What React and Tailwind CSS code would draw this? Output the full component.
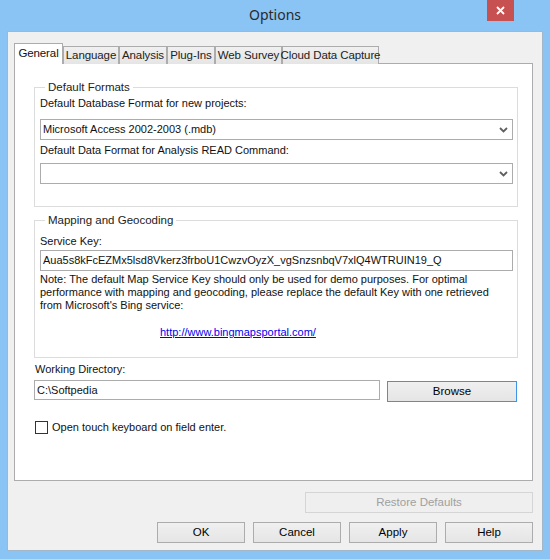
import React from "react";

function Chevron() {
  return (
    <svg width="9" height="6" viewBox="0 0 9 6" className="shrink-0">
      <path d="M1 1 L4.5 4.5 L8 1" fill="none" stroke="#606060" strokeWidth="1.8" />
    </svg>
  );
}

function Select({ value }) {
  return (
    <div className="h-[21px] border border-[#acacac] bg-white flex items-center pl-[2px] pr-[4px]">
      <span className="flex-1 whitespace-nowrap leading-none">{value}</span>
      <Chevron />
    </div>
  );
}

function Btn({ children, className = "" }) {
  return (
    <div
      className={
        "h-[21px] border border-[#acacac] bg-gradient-to-b from-[#f0f0f0] to-[#e5e5e5] flex items-center justify-center text-[11.5px] text-black " +
        className
      }
    >
      {children}
    </div>
  );
}

const tabs = [
  { name: "Language", w: "w-[56px]" },
  { name: "Analysis", w: "w-[48px]" },
  { name: "Plug-Ins", w: "w-[48px]" },
  { name: "Web Survey", w: "w-[67px]" },
  { name: "Cloud Data Capture", w: "w-[97px]" },
];

export default function App() {
  return (
    <div className="w-[550px] h-[559px] bg-[#8ac4f5] flex flex-col overflow-hidden font-['Liberation_Sans',Arial,sans-serif] text-[11px] text-[#111]">
      {/* title bar */}
      <div className="h-[31px] relative flex items-center justify-center shrink-0">
        <span className="text-[14px] text-[#2a2a2a] font-['Noto_Sans',sans-serif] leading-none -mt-[2px]">
          Options
        </span>
        <div className="absolute top-0 right-[36px] w-[27px] h-[21px] bg-[#c75050] flex items-center justify-center">
          <svg width="9" height="9" viewBox="0 0 9 9">
            <path d="M1 1 L8 8 M8 1 L1 8" stroke="#fff" strokeWidth="1.8" />
          </svg>
        </div>
      </div>

      {/* client */}
      <div className="mx-[7px] mb-[8px] flex-1 bg-[#f0f0f0] border border-[#a3b7ca] flex flex-col pl-[6px] pr-[9px] pt-[11px] pb-[7px]">
        {/* tabs */}
        <div className="flex items-end h-[21px] relative z-10 text-[11.5px] tracking-[-0.1px]">
          <div className="w-[49px] h-[21px] bg-white border border-b-0 border-[#acacac] flex items-center justify-center pb-[1px]">
            General
          </div>
          {tabs.map((t) => (
            <div
              key={t.name}
              className={
                t.w +
                " h-[18px] bg-gradient-to-b from-[#f0f0f0] to-[#e5e5e5] border border-b-0 border-[#acacac] flex items-center justify-center whitespace-nowrap text-[#222]"
              }
            >
              {t.name}
            </div>
          ))}
        </div>

        {/* panel */}
        <div className="h-[418px] -mt-px bg-white border border-[#acacac] flex flex-col pl-[19px] pr-[14px] pt-[16px]">
          <fieldset className="min-w-0 border border-[#dcdcdc] pl-[5px] pr-[4px] pb-[22px]">
            <legend className="ml-[5px] px-[3px] leading-[15px] text-[#222] text-[11.5px]">Default Formats</legend>
            <div className="leading-[15px] mt-[1px]">Default Database Format for new projects:</div>
            <div className="mt-[8px]">
              <Select value="Microsoft Access 2002-2003 (.mdb)" />
            </div>
            <div className="leading-[15px] mt-[3px]">Default Data Format for Analysis READ Command:</div>
            <div className="mt-[5px]">
              <Select value="" />
            </div>
          </fieldset>

          <fieldset className="min-w-0 mt-[6px] border border-[#dcdcdc] pl-[5px] pr-[4px] pb-[17px]">
            <legend className="ml-[5px] px-[3px] leading-[15px] text-[#222] text-[11.5px]">Mapping and Geocoding</legend>
            <div className="leading-[15px] mt-[6px]">Service Key:</div>
            <div className="mt-[1px] h-[21px] border border-[#acacac] flex items-center pl-[2px] whitespace-nowrap overflow-hidden">
              Aua5s8kFcEZMx5lsd8Vkerz3frboU1CwzvOyzX_vgSnzsnbqV7xlQ4WTRUIN19_Q
            </div>
            <div className="mt-[2px] leading-[13px] whitespace-nowrap">
              Note: The default Map Service Key should only be used for demo purposes. For optimal
              <br />
              performance with mapping and geocoding, please replace the default Key with one retrieved
              <br />
              from Microsoft's Bing service:
            </div>
            <div className="mt-[13px] leading-[15px] ml-[120px]">
              <span className="text-[#0000ee] underline">http://www.bingmapsportal.com/</span>
            </div>
          </fieldset>

          <div className="mt-[4px] leading-[15px] ml-[1px]">Working Directory:</div>
          <div className="mt-[3px] flex items-start">
            <div className="w-[346px] h-[20px] border border-[#acacac] flex items-center pl-[2px]">C:\Softpedia</div>
            <Btn className="ml-[7px] mt-[1px] w-[130px] !border-[#3c96e8]">Browse</Btn>
          </div>

          <div className="mt-[18px] flex items-center ml-[1px]">
            <div className="w-[13px] h-[13px] border border-[#333] bg-white" />
            <span className="ml-[4px] leading-[15px]">Open touch keyboard on field enter.</span>
          </div>
        </div>

        <div className="mt-[11px] self-end w-[228px] h-[21px] border border-[#d5d5d5] bg-[#efefef] flex items-center justify-center text-[#a0a0a0] text-[11.5px]">
          Restore Defaults
        </div>

        <div className="mt-[9px] flex justify-end gap-[8px]">
          <Btn className="w-[88px]">OK</Btn>
          <Btn className="w-[88px]">Cancel</Btn>
          <Btn className="w-[88px]">Apply</Btn>
          <Btn className="w-[88px]">Help</Btn>
        </div>
      </div>
    </div>
  );
}
